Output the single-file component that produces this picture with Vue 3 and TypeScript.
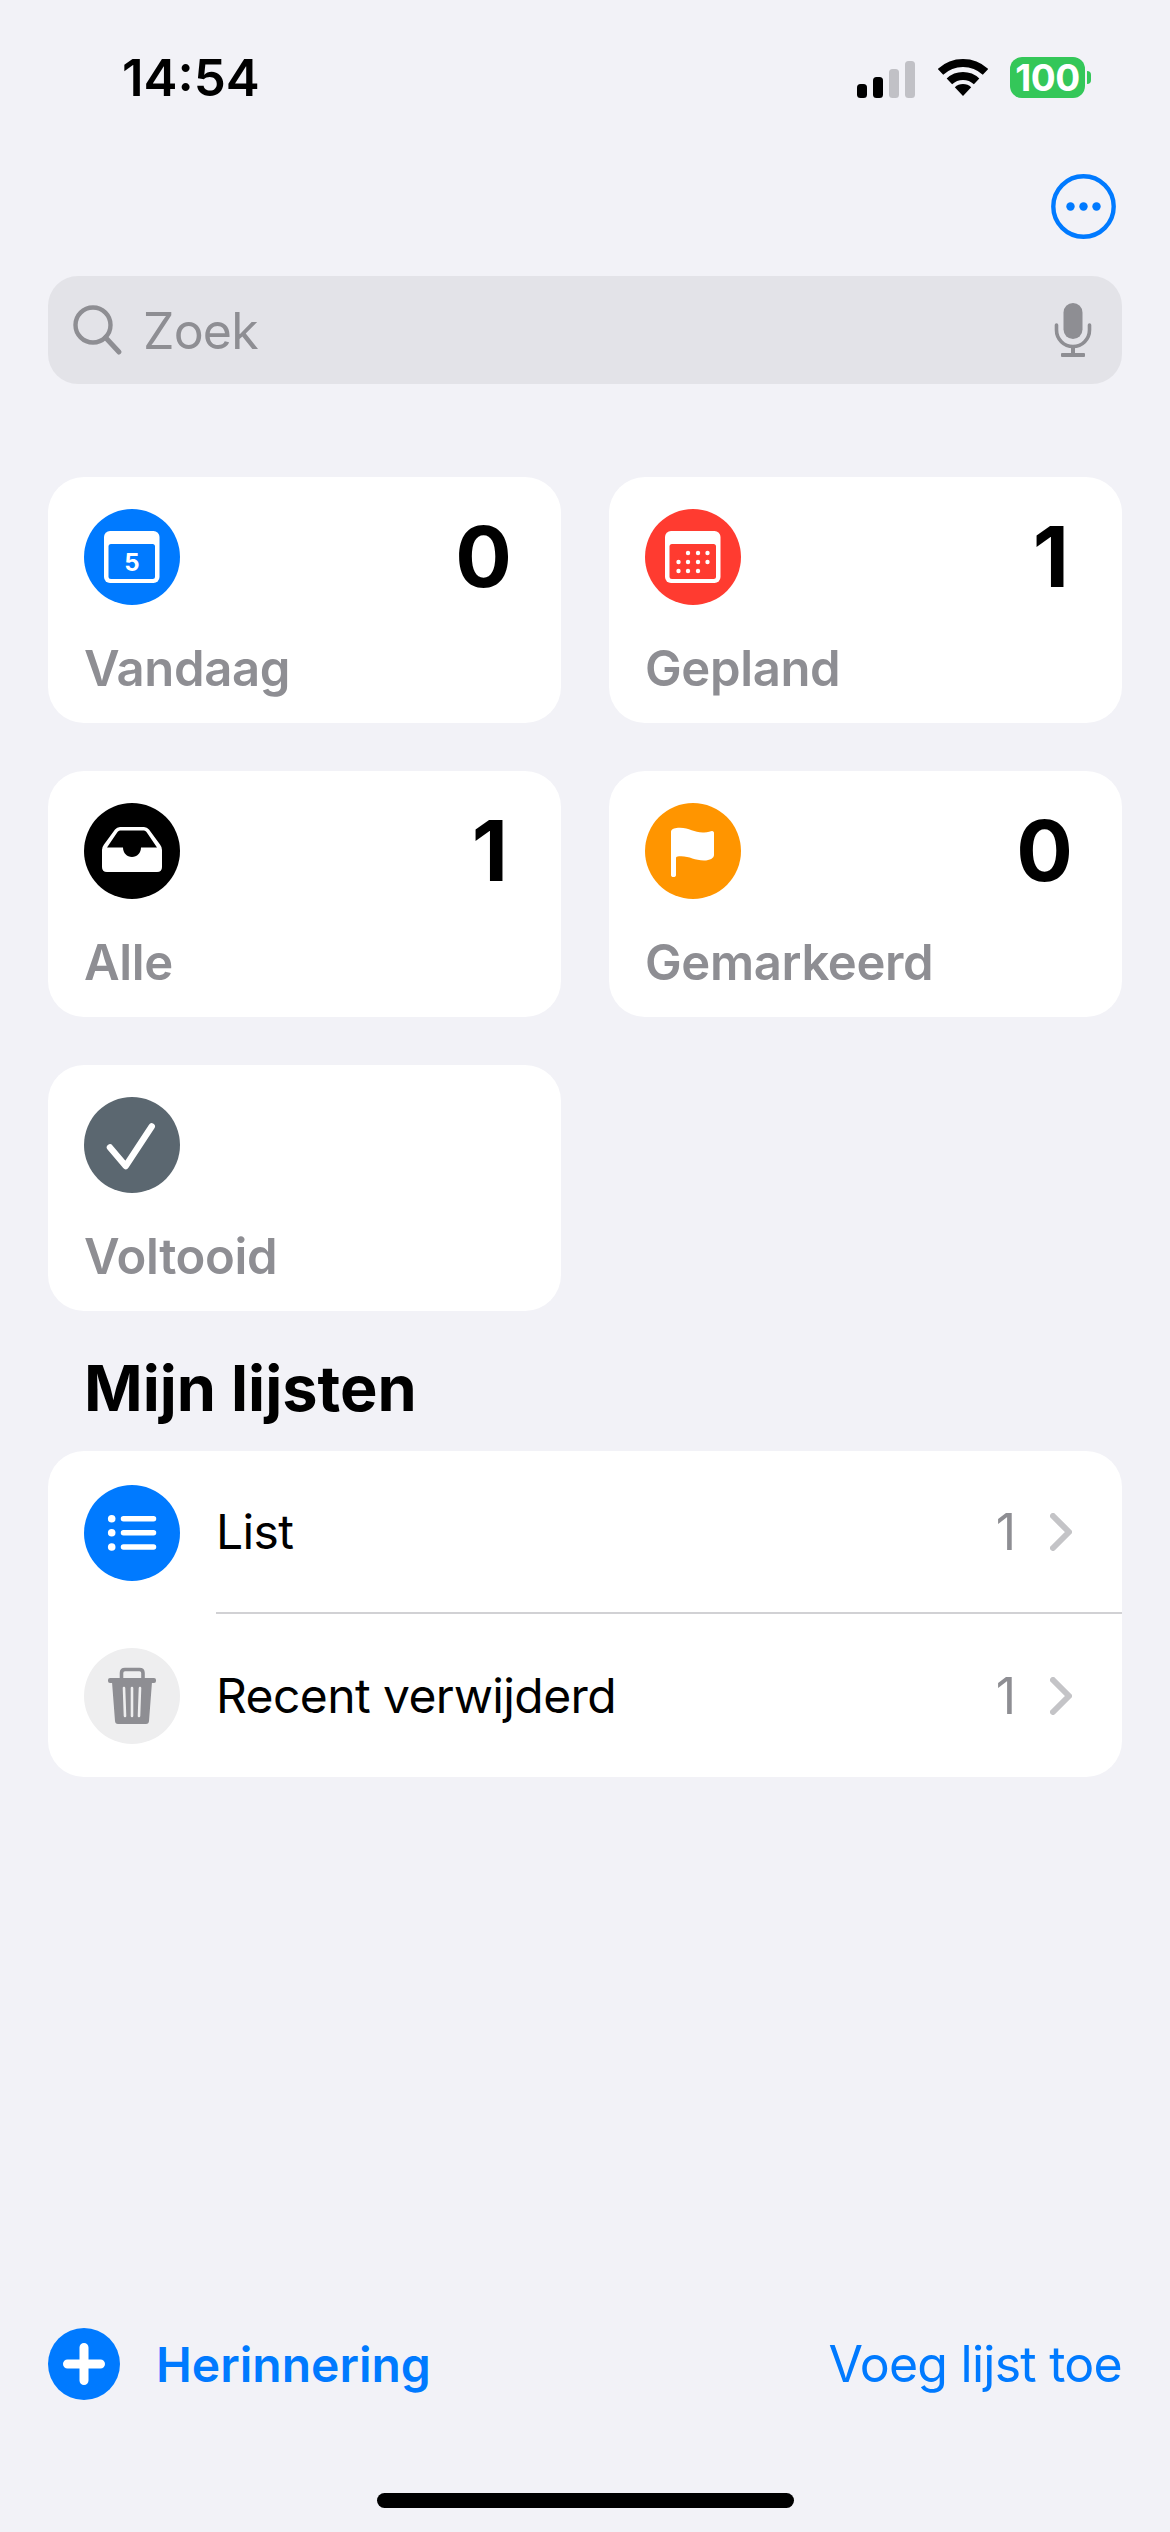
<script setup lang="ts">
interface Tile { id: string; label: string; count: string }
const tiles: Tile[] = [
  { id: 'today', label: 'Vandaag', count: '0' },
  { id: 'planned', label: 'Gepland', count: '1' },
  { id: 'all', label: 'Alle', count: '1' },
  { id: 'flag', label: 'Gemarkeerd', count: '0' },
  { id: 'done', label: 'Voltooid', count: '' },
]
const dots: [number, number][] = [
  [43, 44], [53, 44], [62.5, 44],
  [33.5, 53], [43, 53], [53, 53], [62.5, 53],
  [33.5, 62], [43, 62], [53, 62],
]
</script>

<template>
  <div class="screen">
    <header class="status">
      <span class="time">14:54</span>
      <div class="indicators">
        <div class="signal">
          <i class="bar b1"></i><i class="bar b2"></i><i class="bar b3"></i><i class="bar b4"></i>
        </div>
        <svg class="wifi" width="50" height="37" viewBox="0 0 50 37">
          <path d="M2.5 12.9A33 33 0 0 1 47.5 12.9" fill="none" stroke="#000" stroke-width="8" />
          <path d="M11.4 22.4A20 20 0 0 1 38.6 22.4" fill="none" stroke="#000" stroke-width="8" />
          <path d="M25 37L16.8 28.2A12 12 0 0 1 33.2 28.2Z" fill="#000" />
        </svg>
        <div class="battery">
          <span class="battery-body">100</span>
          <i class="battery-nub"></i>
        </div>
      </div>
    </header>

    <nav class="nav">
      <svg width="65" height="65" viewBox="0 0 65 65">
        <circle cx="32.5" cy="32.5" r="30.2" fill="none" stroke="#007aff" stroke-width="4.4" />
        <circle cx="19.5" cy="32.5" r="4.2" fill="#007aff" />
        <circle cx="32.5" cy="32.5" r="4.2" fill="#007aff" />
        <circle cx="45.5" cy="32.5" r="4.2" fill="#007aff" />
      </svg>
    </nav>

    <div class="search">
      <svg width="52" height="52" viewBox="0 0 52 52">
        <circle cx="21" cy="21" r="17.5" fill="none" stroke="#8e8e93" stroke-width="4.4" />
        <path d="M33.5 33.5L47 48" fill="none" stroke="#8e8e93" stroke-width="5" stroke-linecap="round" />
      </svg>
      <span class="search-text">Zoek</span>
      <svg width="38" height="54" viewBox="0 0 38 54">
        <rect x="9.5" y="0" width="19" height="36" rx="9.5" fill="#8e8e93" />
        <path d="M2.5 22V27A16.5 16.5 0 0 0 35.500 27V22" fill="none" stroke="#8e8e93" stroke-width="3.600" stroke-linecap="round" />
        <path d="M19 44V51" stroke="#8e8e93" stroke-width="4" />
        <rect x="7" y="50" width="24" height="4" rx="1" fill="#8e8e93" />
      </svg>
    </div>

    <section class="grid">
      <article v-for="t in tiles" :key="t.id" class="tile">
        <div class="tile-top">
          <svg v-if="t.id === 'today'" width="96" height="96" viewBox="0 0 96 96">
            <circle cx="48" cy="48" r="48" fill="#007aff" />
            <rect x="20" y="22" width="55.500" height="52" rx="6" fill="#fff" />
            <rect x="24.500" y="35" width="46.500" height="35" rx="2.500" fill="#007aff" />
            <text x="47.800" y="62" text-anchor="middle" class="cal-num">5</text>
          </svg>
          <svg v-else-if="t.id === 'planned'" width="96" height="96" viewBox="0 0 96 96">
            <circle cx="48" cy="48" r="48" fill="#ff3b30" />
            <rect x="20" y="22" width="55.500" height="52" rx="6" fill="#fff" />
            <rect x="24.500" y="35" width="46.500" height="35" rx="2.500" fill="#ff3b30" />
            <circle v-for="(d, i) in dots" :key="i" :cx="d[0]" :cy="d[1]" r="2.200" fill="#fff" />
          </svg>
          <svg v-else-if="t.id === 'all'" width="96" height="96" viewBox="0 0 96 96">
            <circle cx="48" cy="48" r="48" fill="#000" />
            <path d="M36 24H60Q63 24 65 26.500L76 41.500Q78 44 78 47V64Q78 69 73 69H23Q18 69 18 64V47Q18 44 20 41.500L31 26.500Q33 24 36 24Z" fill="#fff" />
            <path d="M36 27.500H60Q61.500 27.500 62.500 29L73 44.500H57C57 50 53 54 48 54C43 54 39 50 39 44.500H23L33.500 29Q34.500 27.500 36 27.500Z" fill="#000" />
          </svg>
          <svg v-else-if="t.id === 'flag'" width="96" height="96" viewBox="0 0 96 96">
            <circle cx="48" cy="48" r="48" fill="#ff9500" />
            <path d="M26 29C26 26.500 29 25 33 24.800C44 24 49 30 59 29.500C63 29.300 66 28 67 28C68.500 28 69 29 69 30V52C69 55 65 57.500 59 57.500C49 57.500 44 52.500 34 53.300C32 53.500 31 54 31 55V72C31 73.500 30 74 28.500 74C27 74 26 73.500 26 72Z" fill="#fff" />
          </svg>
          <svg v-else width="96" height="96" viewBox="0 0 96 96">
            <circle cx="48" cy="48" r="48" fill="#5b6770" />
            <path d="M26 50.500L41.700 69L67.700 29.500" fill="none" stroke="#fff" stroke-width="6.500" stroke-linecap="round" stroke-linejoin="round" />
          </svg>
          <span class="count" :class="{ one: t.count === '1' }">{{ t.count }}</span>
        </div>
        <span class="tile-label">{{ t.label }}</span>
      </article>
    </section>

    <h2 class="heading">Mijn lijsten</h2>

    <section class="lists">
      <div class="row">
        <svg width="96" height="96" viewBox="0 0 96 96">
          <circle cx="48" cy="48" r="48" fill="#007aff" />
          <circle cx="27.700" cy="33.700" r="3.800" fill="#fff" />
          <circle cx="27.700" cy="47.700" r="3.800" fill="#fff" />
          <circle cx="27.700" cy="62" r="3.800" fill="#fff" />
          <path d="M39.500 33.700H69.500M39.500 47.700H69.500M39.500 62H69.500" stroke="#fff" stroke-width="5.500" stroke-linecap="round" />
        </svg>
        <div class="row-body first">
          <span class="row-title">List</span>
          <span class="row-count">1</span>
          <svg width="22" height="38" viewBox="0 0 22 38">
            <path d="M3 3L19 19L3 35" fill="none" stroke="#c4c4c7" stroke-width="6" stroke-linecap="round" stroke-linejoin="round" />
          </svg>
        </div>
      </div>
      <div class="row">
        <svg width="96" height="96" viewBox="0 0 96 96">
          <circle cx="48" cy="48" r="48" fill="#eeeeef" />
          <path d="M37.500 31V25Q37.500 21.500 41 21.500H55.500Q59 21.500 59 25V31" fill="none" stroke="#8e8e93" stroke-width="3.600" />
          <rect x="24" y="30" width="48" height="5" rx="2" fill="#8e8e93" />
          <path d="M28 34H68L65 73Q64.800 76 62 76H34Q31.200 76 31 73Z" fill="#8e8e93" />
          <path d="M40 40L41 68M48 40V68M56 40L55 68" stroke="#eeeeef" stroke-width="2.600" stroke-linecap="round" />
        </svg>
        <div class="row-body">
          <span class="row-title">Recent verwijderd</span>
          <span class="row-count">1</span>
          <svg width="22" height="38" viewBox="0 0 22 38">
            <path d="M3 3L19 19L3 35" fill="none" stroke="#c4c4c7" stroke-width="6" stroke-linecap="round" stroke-linejoin="round" />
          </svg>
        </div>
      </div>
    </section>

    <footer class="toolbar">
      <div class="add">
        <svg width="72" height="72" viewBox="0 0 72 72">
          <circle cx="36" cy="36" r="36" fill="#007aff" />
          <path d="M36 19.500V52.500M19.500 36H52.500" stroke="#fff" stroke-width="9" stroke-linecap="round" />
        </svg>
        <span class="add-text">Herinnering</span>
      </div>
      <span class="add-list">Voeg lijst toe</span>
    </footer>

    <div class="home-wrap"><div class="home"></div></div>
  </div>
</template>

<style>
html, body { margin: 0; background: #f2f2f7; }
</style>

<style scoped>
.screen {
  width: 1170px;
  height: 2532px;
  background: #f2f2f7;
  display: flex;
  flex-direction: column;
  font-family: Inter, "Liberation Sans", sans-serif;
  color: #000;
  overflow: hidden;
}
.status {
  height: 174px;
  flex: none;
  box-sizing: border-box;
  padding: 50px 79px 0 122px;
  display: flex;
  justify-content: space-between;
  align-items: flex-start;
}
.time {
  font-size: 51px;
  font-weight: 600;
  line-height: 56px;
}
.indicators {
  display: flex;
  align-items: flex-start;
  padding-top: 7px;
}
.signal {
  display: flex;
  align-items: flex-end;
  gap: 6px;
  height: 37px;
  padding-top: 2px;
  margin-top: 2px;
  margin-right: 23px;
}
.bar { display: block; width: 10px; border-radius: 3.5px; background: #000; }
.b1 { height: 14px; }
.b2 { height: 21px; }
.b3 { height: 29px; background: #c1c1c6; }
.b4 { height: 37px; background: #c1c1c6; }
.wifi { display: block; margin-top: 2px; margin-right: 22px; }
.battery { display: flex; align-items: center; height: 41px; }
.battery-body {
  width: 75px;
  height: 41px;
  border-radius: 12px;
  background: #34c759;
  color: #fff;
  font-size: 37px;
  font-weight: 700;
  line-height: 41px;
  letter-spacing: -0.5px;
  text-align: center;
}
.battery-nub {
  display: block;
  width: 4px;
  height: 13px;
  margin-left: 2px;
  border-radius: 0 7px 7px 0;
  background: #34c759;
}
.nav {
  height: 65px;
  flex: none;
  display: flex;
  justify-content: flex-end;
  padding-right: 54px;
}
.nav svg { display: block; }
.search {
  flex: none;
  height: 108px;
  margin: 37px 48px 0;
  padding: 0 30px 0 24px;
  border-radius: 30px;
  background: #e3e3e8;
  display: flex;
  align-items: center;
}
.search-text {
  flex: 1;
  margin-left: 19px;
  padding-top: 2px;
  color: #8e8e93;
  font-size: 50px;
  letter-spacing: -0.8px;
}
.grid {
  flex: none;
  margin: 93px 48px 0;
  display: grid;
  grid-template-columns: 513px 513px;
  grid-auto-rows: 246px;
  gap: 48px;
}
.tile {
  box-sizing: border-box;
  padding: 32px 36px 0;
  border-radius: 36px;
  background: #fff;
  display: flex;
  flex-direction: column;
}
.tile-top {
  display: flex;
  justify-content: space-between;
  align-items: flex-start;
  height: 96px;
}
.tile-top svg { display: block; }
.cal-num { fill: #fff; font-size: 24px; font-weight: 700; font-family: Inter, sans-serif; }
.count {
  font-size: 84px;
  font-weight: 700;
  line-height: 96px;
  padding-right: 13px;
}
.count.one { padding-right: 17px; }
.tile-label {
  margin-top: 35px;
  color: #8e8e93;
  font-size: 49px;
  font-weight: 600;
  line-height: 58px;
  letter-spacing: -0.35px;
}
.heading {
  flex: none;
  height: 140px;
  margin: 0;
  padding-left: 84px;
  box-sizing: border-box;
  font-size: 63px;
  font-weight: 700;
  line-height: 154px;
}
.lists {
  flex: none;
  margin: 0 48px;
  height: 326px;
  border-radius: 36px;
  background: #fff;
  overflow: hidden;
}
.row {
  height: 163px;
  display: flex;
  padding-left: 36px;
  align-items: center;
  gap: 36px;
}
.row > svg { display: block; flex: none; }
.row-body {
  flex: 1;
  align-self: stretch;
  display: flex;
  align-items: center;
  padding-right: 50px;
}
.row-body.first { border-bottom: 2px solid #d1d1d4; box-sizing: border-box; }
.row-body svg { display: block; }
.row-title { flex: 1; font-size: 48px; letter-spacing: -0.6px; }
.row-count { color: #8e8e93; font-size: 50px; margin-right: 34px; }
.toolbar {
  flex: none;
  margin-top: auto;
  padding: 0 48px;
  height: 72px;
  display: flex;
  justify-content: space-between;
  align-items: center;
}
.add { display: flex; align-items: center; gap: 36px; }
.add svg { display: block; }
.add-text { color: #007aff; font-size: 48px; font-weight: 600; }
.add-list { color: #007aff; font-size: 50px; letter-spacing: -0.75px; }
.home-wrap {
  flex: none;
  height: 132px;
  padding-top: 93px;
  box-sizing: border-box;
  display: flex;
  justify-content: center;
}
.home { width: 417px; height: 15px; border-radius: 8px; background: #000; }
</style>
